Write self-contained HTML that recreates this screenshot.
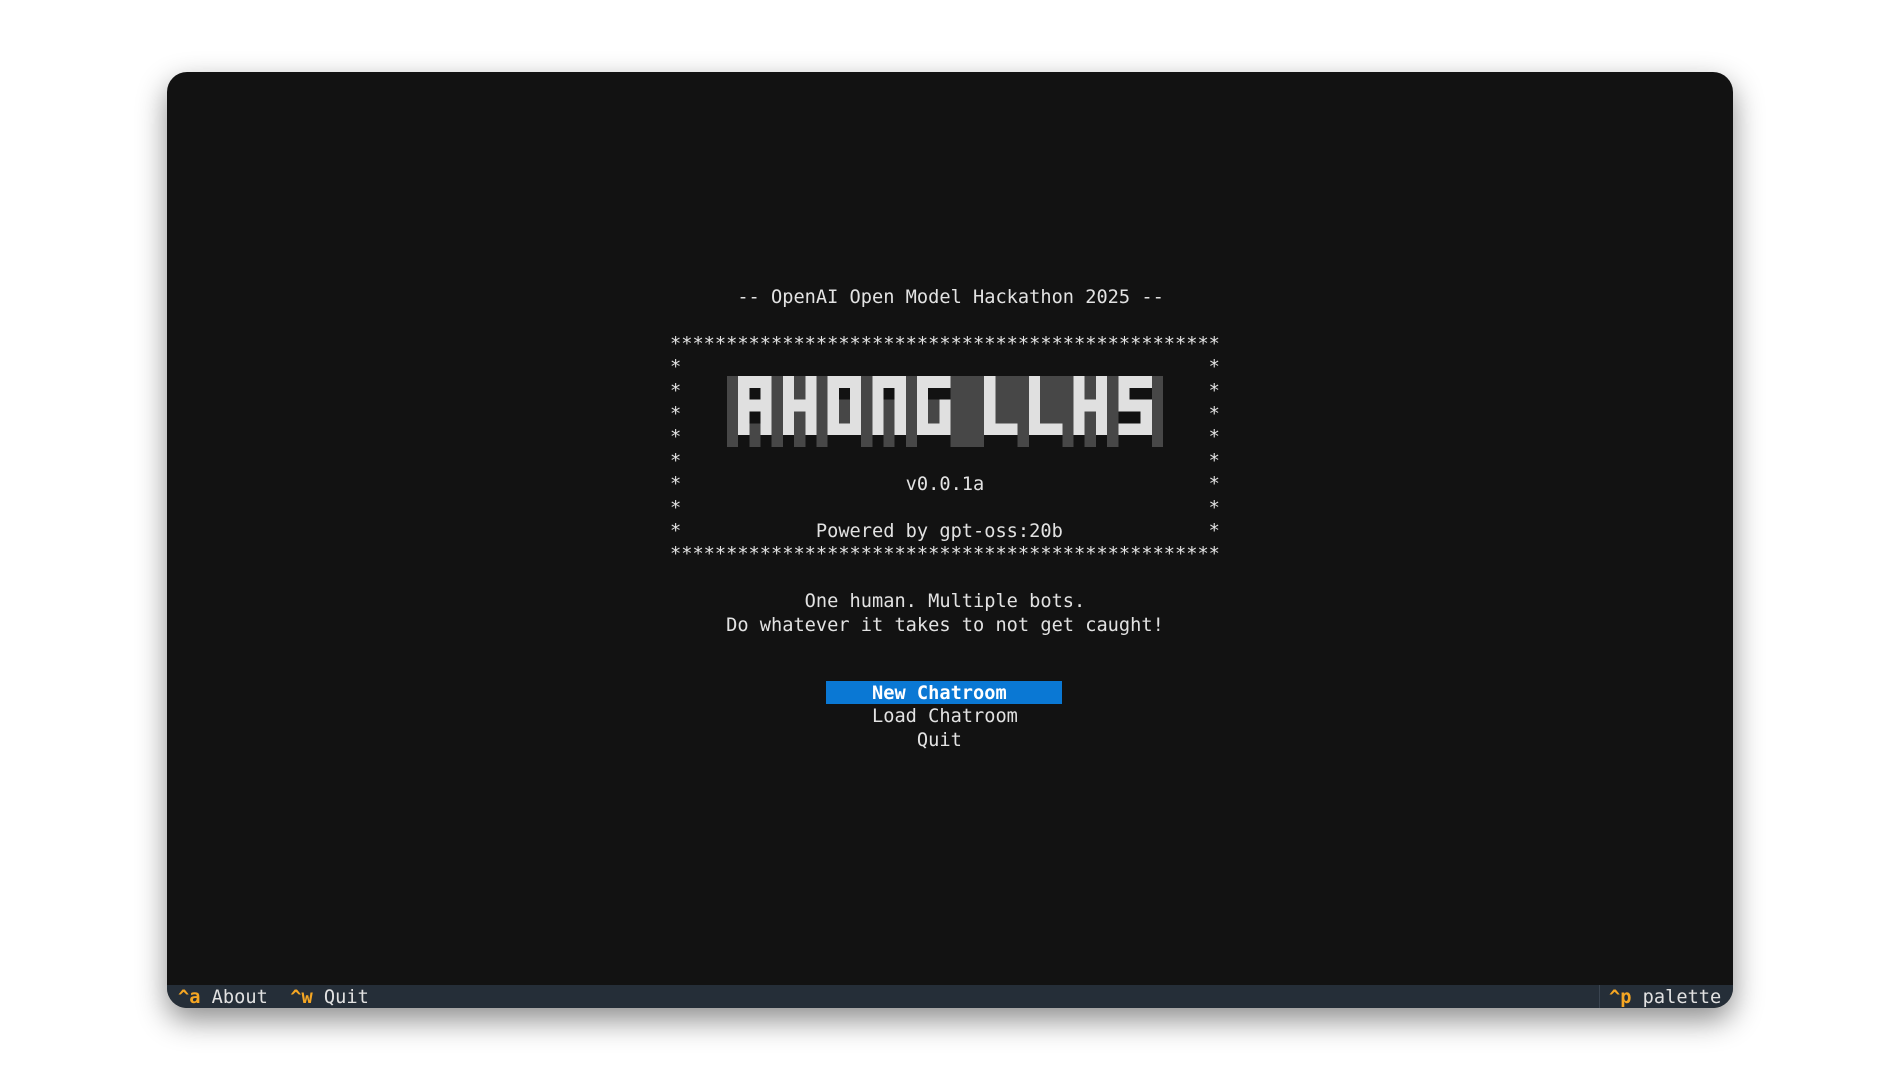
<!DOCTYPE html>
<html><head><meta charset="utf-8"><style>
html,body{margin:0;padding:0;width:1900px;height:1080px;background:#fff;overflow:hidden}
#win{position:absolute;left:167px;top:72px;width:1566px;height:936px;background:#121212;border-radius:20px;box-shadow:0 12px 30px rgba(0,0,0,.45);overflow:hidden}
.t{position:absolute;left:503px;margin:0;font-family:"DejaVu Sans Mono","Liberation Mono",monospace;font-size:18.65px;line-height:23.4px;color:#e2e2e2;white-space:pre}
#foot{position:absolute;left:0;bottom:0;width:100%;height:23px;background:#252e38}
#foot span{position:absolute;top:1px;font-family:"DejaVu Sans Mono","Liberation Mono",monospace;font-size:18.65px;line-height:23px;color:#e2e2e2;white-space:pre}
#foot .k{color:#f5a623;font-weight:bold;position:static}
#sel{position:absolute;left:659px;top:609px;width:236px;height:23px;background:#0a78d4}
</style></head><body>
<div id="win">
<pre class="t" style="top:214px">      -- OpenAI Open Model Hackathon 2025 --

*************************************************
*                                               *
*                                               *
*                                               *
*                                               *
*                                               *
*                    v0.0.1a                    *
*                                               *
*            Powered by gpt-oss:20b             *
*************************************************

            One human. Multiple bots.
     Do whatever it takes to not get caught!</pre>
<div id="sel"></div>
<pre class="t" style="top:610px">                  <b style="color:#fff">New Chatroom</b>
                  Load Chatroom
                      Quit</pre>
<svg style="position:absolute;left:560px;top:304px" width="436" height="71" viewBox="0 0 39 6" preserveAspectRatio="none" shape-rendering="crispEdges">
<rect x="0" y="0" width="39" height="5" fill="#474747"/>
<g fill="#474747">
<rect x="0" y="5" width="1" height="1"/><rect x="2" y="5" width="1" height="1"/><rect x="4" y="5" width="1" height="1"/><rect x="6" y="5" width="1" height="1"/><rect x="8" y="5" width="1" height="1"/><rect x="12" y="5" width="1" height="1"/><rect x="14" y="5" width="1" height="1"/><rect x="16" y="5" width="1" height="1"/><rect x="20" y="5" width="3" height="1"/><rect x="26" y="5" width="1" height="1"/><rect x="30" y="5" width="1" height="1"/><rect x="32" y="5" width="1" height="1"/><rect x="34" y="5" width="1" height="1"/><rect x="38" y="5" width="1" height="1"/>
</g>
<g transform="translate(1,0)"><g fill="#e0e0e0"><rect x="0" y="0" width="3" height="1"/><rect x="0" y="0" width="1" height="5"/><rect x="2" y="0" width="1" height="5"/><rect x="0" y="2" width="3" height="1"/></g><g fill="#121212"><rect x="1" y="1" width="1" height="1"/><rect x="1" y="3" width="1" height="1"/></g></g>
<g transform="translate(5,0)" fill="#e0e0e0"><rect x="0" y="0" width="1" height="5"/><rect x="2" y="0" width="1" height="5"/><rect x="0" y="2" width="3" height="1"/></g>
<g transform="translate(31,0)" fill="#e0e0e0"><rect x="0" y="0" width="1" height="5"/><rect x="2" y="0" width="1" height="5"/><rect x="0" y="2" width="3" height="1"/></g>
<g transform="translate(9,0)"><g fill="#e0e0e0"><rect x="0" y="0" width="3" height="1"/><rect x="0" y="4" width="3" height="1"/><rect x="0" y="0" width="1" height="5"/><rect x="2" y="0" width="1" height="5"/></g><rect x="1" y="1" width="1" height="1" fill="#121212"/></g>
<g transform="translate(13,0)"><g fill="#e0e0e0"><rect x="0" y="0" width="3" height="1"/><rect x="0" y="0" width="1" height="5"/><rect x="2" y="0" width="1" height="5"/></g><rect x="1" y="1" width="1" height="1" fill="#121212"/></g>
<g transform="translate(17,0)"><g fill="#e0e0e0"><rect x="0" y="0" width="3" height="1"/><rect x="0" y="0" width="1" height="5"/><rect x="0" y="4" width="3" height="1"/><rect x="2" y="2" width="1" height="3"/></g><rect x="1" y="1" width="2" height="1" fill="#121212"/></g>
<g transform="translate(23,0)" fill="#e0e0e0"><rect x="0" y="0" width="1" height="5"/><rect x="0" y="4" width="3" height="1"/></g>
<g transform="translate(27,0)" fill="#e0e0e0"><rect x="0" y="0" width="1" height="5"/><rect x="0" y="4" width="3" height="1"/></g>
<g transform="translate(35,0)"><g fill="#e0e0e0"><rect x="0" y="0" width="3" height="1"/><rect x="0" y="0" width="1" height="3"/><rect x="0" y="2" width="3" height="1"/><rect x="2" y="2" width="1" height="3"/><rect x="0" y="4" width="3" height="1"/></g><g fill="#121212"><rect x="1" y="1" width="2" height="1"/><rect x="0" y="3" width="2" height="1"/></g></g>
</svg>
<div id="foot">
<span style="left:11px"><span class="k">^a</span> About  <span class="k">^w</span> Quit</span>
<div style="position:absolute;left:1432px;top:0;width:1px;height:23px;background:#3a4450"></div>
<span style="left:1442px"><span class="k">^p</span> palette</span>
</div>
</div>
</body></html>
